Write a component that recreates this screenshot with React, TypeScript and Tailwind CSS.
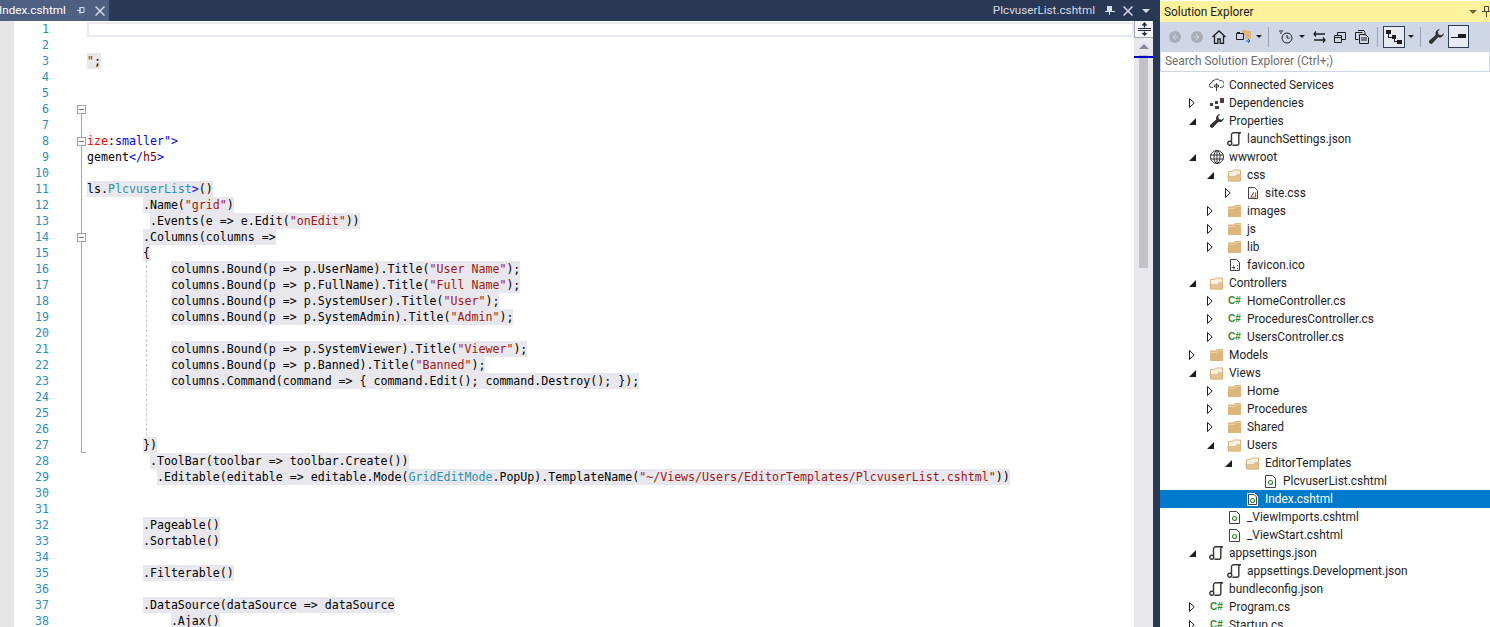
import type { ReactNode } from "react"

const STR = "text-[#a31515]"
const BLUE = "text-[#0000ff]"
const RED = "text-[#ff0000]"
const MAROON = "text-[#800000]"
const TYPE = "text-[#2b91af]"

type Token = string | [string, string]
type CodeLine = { indent?: number; tokens?: Token[]; plain?: boolean }

const bound = (a: string, b: string): Token[] => [`columns.Bound(p => p.${a}).Title(`, [`"${b}"`, STR], ");"]

// 38 visible editor lines
const code: CodeLine[] = [
  {},
  {},
  { tokens: [['"', STR], ";"] },
  {},
  {},
  {},
  {},
  { plain: true, tokens: [["ize", RED], ":", ["smaller", BLUE], ['">', BLUE]] },
  { plain: true, tokens: ["gement", ["</", BLUE], ["h5", MAROON], [">", BLUE]] },
  {},
  { tokens: ["ls.", ["PlcvuserList", TYPE], [">", BLUE], "()"] },
  { indent: 8, tokens: [".Name(", ['"grid"', STR], ")"] },
  { indent: 9, tokens: [".Events(e => e.Edit(", ['"onEdit"', STR], "))"] },
  { indent: 8, tokens: [".Columns(columns =>"] },
  { indent: 8, tokens: ["{"] },
  { indent: 12, tokens: bound("UserName", "User Name") },
  { indent: 12, tokens: bound("FullName", "Full Name") },
  { indent: 12, tokens: bound("SystemUser", "User") },
  { indent: 12, tokens: bound("SystemAdmin", "Admin") },
  {},
  { indent: 12, tokens: bound("SystemViewer", "Viewer") },
  { indent: 12, tokens: bound("Banned", "Banned") },
  { indent: 12, tokens: ["columns.Command(command => { command.Edit(); command.Destroy(); });"] },
  {},
  {},
  {},
  { indent: 8, tokens: ["})"] },
  { indent: 9, tokens: [".ToolBar(toolbar => toolbar.Create())"] },
  {
    indent: 10,
    tokens: [
      ".Editable(editable => editable.Mode(",
      ["GridEditMode", TYPE],
      ".PopUp).TemplateName(",
      ['"~/Views/Users/EditorTemplates/PlcvuserList.cshtml"', STR],
      "))",
    ],
  },
  {},
  {},
  { indent: 8, tokens: [".Pageable()"] },
  { indent: 8, tokens: [".Sortable()"] },
  {},
  { indent: 8, tokens: [".Filterable()"] },
  {},
  { indent: 8, tokens: [".DataSource(dataSource => dataSource"] },
  { indent: 12, tokens: [".Ajax()"] },
]

const foldBoxes = [6, 8, 14]

function FoldBox({ top }: { top: number }) {
  return (
    <div
      className="absolute left-[63px] flex h-[9px] w-[9px] items-center justify-center border border-[#a5a5a5] bg-white"
      style={{ top }}
    >
      <div className="h-px w-[5px] bg-[#6e6e6e]" />
    </div>
  )
}

function Editor() {
  return (
    <div className="relative min-w-0 flex-1 overflow-hidden bg-white font-['DejaVu_Sans_Mono',monospace] text-[11.62px] leading-4 text-black">
      {/* fold margin */}
      <div className="absolute left-[67px] top-[93px] h-[339px] w-px bg-[#a5a5a5]" />
      <div className="absolute left-[67px] top-[431px] h-px w-[5px] bg-[#a5a5a5]" />
      <div className="absolute left-[132px] top-[239px] h-[176px] border-l border-dashed border-[#c8c8c8]" />
      {foldBoxes.map((n) => (
        <FoldBox key={n} top={(n - 1) * 16 + 4} />
      ))}
      {code.map((line, i) => (
        <div key={i} className="flex h-4">
          <div className="w-[35px] shrink-0 text-right text-[#2b91af]">{i + 1}</div>
          <div className="w-[38px] shrink-0" />
          {i === 0 ? (
            <div className="mt-px h-[15px] flex-1 border-2 border-[#eaeaf2]" />
          ) : (
            <div className="whitespace-pre">
              {" ".repeat(line.indent ?? 0)}
              {line.tokens && (
                <span className={`inline-block h-4 ${line.plain ? "" : "bg-[#e8e8ec]"}`}>
                  {line.tokens.map((t, j) =>
                    typeof t === "string" ? <span key={j}>{t}</span> : <span key={j} className={t[1]}>{t[0]}</span>,
                  )}
                </span>
              )}
            </div>
          )}
        </div>
      ))}
    </div>
  )
}

function Scrollbar() {
  return (
    <div className="relative w-[19px] shrink-0 bg-[#e8e8ec]">
      <div className="flex h-[17px] w-full items-center justify-center border-b border-l border-[#a5a8b0] bg-[#f5f5f7]">
        <svg width="13" height="14" viewBox="0 0 13 14" fill="#1e2a3c">
          <path d="M6.500 0 9.500 3.500H7.200V5.500H5.800V3.500H3.500ZM0 6H13V7H0ZM0 8H13V9H0ZM5.800 9.500H7.200V11H9.500L6.500 14 3.500 11H5.800Z" />
        </svg>
      </div>
      <div className="mx-auto mt-[6px] h-0 w-0 border-x-[5px] border-b-[5px] border-x-transparent border-b-[#868999]" />
      <div className="absolute left-[5px] top-[34px] h-[213px] w-[9px] bg-[#c2c3c9]" />
      <div className="absolute left-0 top-[35px] h-[2px] w-full bg-[#0000c8]" />
    </div>
  )
}

function CloseX({ color = "#d6dbe9" }: { color?: string }) {
  return (
    <svg width="10" height="10" viewBox="0 0 10 10" stroke={color} strokeWidth="1.500">
      <path d="M.5.5l9 9M9.500.5l-9 9" />
    </svg>
  )
}

function TabBar() {
  return (
    <div className="flex h-[21px] shrink-0 items-center bg-[#293955] font-['Roboto',sans-serif] text-[11.7px]">
      <div className="flex h-full w-[109px] items-center bg-[#4d6082] text-white">
        <span className="ml-[-1px] w-[77px] shrink-0">Index.cshtml</span>
        <svg width="9" height="9" viewBox="0 0 9 9" fill="none" stroke="#d6dbe9" className="ml-[1px]">
          <path d="M0 4.500h3M3 1.500h4v5H3zM3 1v7" />
        </svg>
        <span className="ml-[9px]"><CloseX /></span>
      </div>
      <div className="flex-1" />
      <span className="text-[#d6dbe9]">PlcvuserList.cshtml</span>
      <svg width="10" height="9" viewBox="0 0 10 9" fill="#d6dbe9" className="ml-[10px]">
        <path d="M2 0h5v5h3v1H0V5h2zM4 6h1v3H4z" />
      </svg>
      <span className="ml-[8px]"><CloseX /></span>
      <div className="ml-[9px] mr-[3px] h-0 w-0 border-x-[4px] border-t-[4px] border-x-transparent border-t-[#d6dbe9]" />
    </div>
  )
}

/* ---------- solution explorer icons ---------- */

function FolderIcon({ open }: { open?: boolean }) {
  if (open) {
    return (
      <svg width="15" height="13" viewBox="0 0 15 13">
        <path d="M1.500 2.500h4l1-1.500h7v11h-12z" fill="#f5f0e4" stroke="#dcb67a" />
        <path d="M0 7h8l2-2h3.500v7.500H2z" fill="#dcb67a" opacity="0.8" />
      </svg>
    )
  }
  return (
    <svg width="13" height="12" viewBox="0 0 13 12" fill="#dcb67a">
      <path d="M0 1.500h6L7 0h6v12H0z" />
      <path d="M0 3h6.500L8 1.500h5V2H8.300L7 3.500H0z" fill="#f5e9d0" />
    </svg>
  )
}

function RazorIcon({ light }: { light?: boolean }) {
  return (
    <svg width="11" height="13" viewBox="0 0 11 13">
      <path d="M.5.500h7l3 3v9H.5z" stroke={light ? "#fff" : "#424242"} fill="#fff" />
      {light && <path d="M1.500 1.500h5.500l2.500 2.500v7.500h-8z" stroke="#424242" fill="#fff" />}
      <circle cx="5.500" cy="7.500" r="2" fill="none" stroke="#388a34" strokeWidth="1.200" />
    </svg>
  )
}

function JsonIcon() {
  return (
    <svg width="15" height="14" viewBox="0 0 15 14" fill="none" stroke="#333333" strokeWidth="1.400">
      <path d="M4.500 9.500V3a2.200 2.200 0 0 1 2.200-2.300h7.300M14 .7a2 2 0 0 0-2.200 2.200v8.400a2 2 0 0 1-2 2H5.500" />
      <circle cx="2.800" cy="11.300" r="2" />
    </svg>
  )
}

function CssIcon() {
  return (
    <svg width="10" height="12" viewBox="0 0 10 12" fill="none">
      <path d="M.5.500h6l3 3v8h-9z" fill="#fff" stroke="#424242" />
      <path d="M6 5 3 10h4.500V5.500" stroke="#c1532c" strokeWidth="1.100" />
    </svg>
  )
}

function IcoIcon() {
  return (
    <svg width="10" height="12" viewBox="0 0 10 12" fill="none">
      <path d="M.5.500h6l3 3v8h-9z" stroke="#424242" />
      <path d="M3 6.500h1v1H3zM2 8h3v1H4.500v1.500h-1V9H2zM7 6h1v1H7zM7 9h1v1H7z" fill="#424242" />
    </svg>
  )
}

function GlobeIcon() {
  return (
    <svg width="14" height="14" viewBox="0 0 14 14" fill="none" stroke="#333333">
      <circle cx="7" cy="7" r="6.500" />
      <ellipse cx="7" cy="7" rx="3" ry="6.500" />
      <path d="M.5 5h13M.5 9h13M7 .5v13" />
    </svg>
  )
}

function WrenchIcon({ size = 14 }: { size?: number }) {
  return (
    <svg width={size} height={size} viewBox="0 0 14 14" fill="#333333">
      <path d="M14 3.800a4.300 4.300 0 0 1-5.500 4L3.300 13.300a1.900 1.900 0 0 1-2.700-2.700L6.200 5.500A4.300 4.300 0 0 1 10.300 0L8.200 2.400l.7 2.700 2.700.7z" />
    </svg>
  )
}

function DepsIcon() {
  return (
    <svg width="14" height="11" viewBox="0 0 14 11" fill="#424242">
      <path d="M0 5h3v3H0zM5 3h3v3H5zM5 8h4v3H5zM10 0h4v5h-4z" />
    </svg>
  )
}

function CloudIcon() {
  return (
    <svg width="15" height="14" viewBox="0 0 15 14" fill="none" stroke="#424242">
      <path d="M4 9.500H2.500a2 2 0 0 1 0-4.300 3 3 0 0 1 2.700-3 3.500 3.500 0 0 1 5.600.5 3.300 3.300 0 0 1 1.700 6.800H11" />
      <path d="M7.500 5v8M5.500 7h4v2h-4z" />
    </svg>
  )
}

function CSharpIcon() {
  return <span className="font-['Liberation_Sans',sans-serif] text-[10px] font-bold leading-none text-[#388a34]">C#</span>
}

function Arrow({ state }: { state?: "open" | "closed" }) {
  if (state === "open") {
    return (
      <svg width="7" height="7" viewBox="0 0 7 7" fill="#1e1e1e">
        <path d="M7 0v7H0z" />
      </svg>
    )
  }
  if (state === "closed") {
    return (
      <svg width="6" height="10" viewBox="0 0 6 10" fill="none" stroke="#1e1e1e">
        <path d="M.5.500 5.200 5 .5 9.500z" />
      </svg>
    )
  }
  return null
}

type TreeRow = { level: number; label: string; icon: ReactNode; arrow?: "open" | "closed"; selected?: boolean }

const levelPadding = ["pl-[22px]", "pl-[40px]", "pl-[58px]", "pl-[76px]"]

const tree: TreeRow[] = [
  { level: 0, label: "Connected Services", icon: <CloudIcon /> },
  { level: 0, label: "Dependencies", icon: <DepsIcon />, arrow: "closed" },
  { level: 0, label: "Properties", icon: <WrenchIcon />, arrow: "open" },
  { level: 1, label: "launchSettings.json", icon: <JsonIcon /> },
  { level: 0, label: "wwwroot", icon: <GlobeIcon />, arrow: "open" },
  { level: 1, label: "css", icon: <FolderIcon open />, arrow: "open" },
  { level: 2, label: "site.css", icon: <CssIcon />, arrow: "closed" },
  { level: 1, label: "images", icon: <FolderIcon />, arrow: "closed" },
  { level: 1, label: "js", icon: <FolderIcon />, arrow: "closed" },
  { level: 1, label: "lib", icon: <FolderIcon />, arrow: "closed" },
  { level: 1, label: "favicon.ico", icon: <IcoIcon /> },
  { level: 0, label: "Controllers", icon: <FolderIcon open />, arrow: "open" },
  { level: 1, label: "HomeController.cs", icon: <CSharpIcon />, arrow: "closed" },
  { level: 1, label: "ProceduresController.cs", icon: <CSharpIcon />, arrow: "closed" },
  { level: 1, label: "UsersController.cs", icon: <CSharpIcon />, arrow: "closed" },
  { level: 0, label: "Models", icon: <FolderIcon />, arrow: "closed" },
  { level: 0, label: "Views", icon: <FolderIcon open />, arrow: "open" },
  { level: 1, label: "Home", icon: <FolderIcon />, arrow: "closed" },
  { level: 1, label: "Procedures", icon: <FolderIcon />, arrow: "closed" },
  { level: 1, label: "Shared", icon: <FolderIcon />, arrow: "closed" },
  { level: 1, label: "Users", icon: <FolderIcon open />, arrow: "open" },
  { level: 2, label: "EditorTemplates", icon: <FolderIcon open />, arrow: "open" },
  { level: 3, label: "PlcvuserList.cshtml", icon: <RazorIcon /> },
  { level: 2, label: "Index.cshtml", icon: <RazorIcon light />, selected: true },
  { level: 1, label: "_ViewImports.cshtml", icon: <RazorIcon /> },
  { level: 1, label: "_ViewStart.cshtml", icon: <RazorIcon /> },
  { level: 0, label: "appsettings.json", icon: <JsonIcon />, arrow: "open" },
  { level: 1, label: "appsettings.Development.json", icon: <JsonIcon /> },
  { level: 0, label: "bundleconfig.json", icon: <JsonIcon /> },
  { level: 0, label: "Program.cs", icon: <CSharpIcon />, arrow: "closed" },
  { level: 0, label: "Startup.cs", icon: <CSharpIcon />, arrow: "closed" },
]

function MiniCaret() {
  return <div className="h-0 w-0 border-x-[3px] border-t-[3px] border-x-transparent border-t-[#1e1e1e]" />
}

function Divider() {
  return <div className="h-5 w-px bg-[#9aa3b5]" />
}

function Toolbar() {
  return (
    <div className="flex h-[29px] shrink-0 items-center bg-[#cfd6e5] pl-[9px]">
      <svg width="12" height="12" viewBox="0 0 12 12">
        <circle cx="6" cy="6" r="6" fill="#a9aeb8" />
        <path d="M7 3 4 6l3 3M4 6h5" stroke="#cfd6e5" fill="none" />
      </svg>
      <svg width="12" height="12" viewBox="0 0 12 12" className="ml-[10px]">
        <circle cx="6" cy="6" r="6" fill="#a9aeb8" />
        <path d="M5 3l3 3-3 3M8 6H3" stroke="#cfd6e5" fill="none" />
      </svg>
      <svg width="14" height="14" viewBox="0 0 14 14" fill="none" stroke="#1e1e1e" strokeWidth="1.300" className="ml-[9px]">
        <path d="M.5 7 7 1l6.500 6M2.500 6v7.500h3.300V9h2.400v4.500h3.300V6" />
      </svg>
      <svg width="15" height="14" viewBox="0 0 15 14" className="ml-[10px]">
        <path d="M6 0h4l1 1h4v8H9V5H6z" fill="#dcb67a" />
        <path d="M.5 3.500h7v6h-7z" fill="none" stroke="#1e1e1e" />
        <path d="M1 2h3v1.500H1z" fill="#1e1e1e" />
        <path d="M10 11h4M12 13l2-2-2-2" stroke="#1a5fb4" fill="none" />
      </svg>
      <span className="ml-[5px]"><MiniCaret /></span>
      <span className="ml-[6px]"><Divider /></span>
      <svg width="14" height="14" viewBox="0 0 14 14" fill="none" stroke="#1e1e1e" className="ml-[10px]">
        <circle cx="8" cy="8" r="5" />
        <path d="M8 5v3h2.500M0 1h4M1 3h2" />
      </svg>
      <span className="ml-[6px]"><MiniCaret /></span>
      <svg width="13" height="12" viewBox="0 0 13 12" fill="none" stroke="#1e1e1e" strokeWidth="1.300" className="ml-[8px]">
        <path d="M3 .5 1 3l2 2.500M1 3h11M10 6.500 12 9l-2 2.500M12 9H1" />
      </svg>
      <svg width="12" height="12" viewBox="0 0 12 12" fill="none" stroke="#1e1e1e" className="ml-[8px]">
        <path d="M.5 4.500h7v7h-7zM3.500 4V1.500h8v7H8M1 6.500h6" />
      </svg>
      <svg width="14" height="14" viewBox="0 0 14 14" fill="none" stroke="#1e1e1e" className="ml-[9px]">
        <path d="M.5 2.500h7M.5 2.500v7h3M3 .5h6l1 2v3M4.500 4.500h6l3 3v6h-9zM6 8h6M6 10h6" />
      </svg>
      <span className="ml-[8px]"><Divider /></span>
      <div className="ml-[5px] flex h-[22px] w-[22px] items-center justify-center border border-[#2f3e58] bg-[#e7ebf3]">
        <svg width="16" height="14" viewBox="0 0 16 14" fill="#1e1e1e">
          <path d="M0 0h5v4H0zM6 5h4v4H6zM11 10h5v4h-5z" />
          <path d="M2 4h1v3h3v1H2zM8 9h1v2h2v1H8z" />
        </svg>
      </div>
      <span className="ml-[3px]"><MiniCaret /></span>
      <span className="ml-[6px]"><Divider /></span>
      <span className="ml-[8px]"><WrenchIcon size={15} /></span>
      <div className="ml-[4px] flex h-[23px] w-[21px] items-center justify-center border border-[#2f3e58] bg-[#e7ebf3]">
        <svg width="15" height="5" viewBox="0 0 15 5" fill="#1e1e1e">
          <path d="M7 0h8v3H7zM0 3h15v1H0z" />
        </svg>
      </div>
    </div>
  )
}

function SolutionExplorer() {
  return (
    <div className="flex w-[330px] shrink-0 flex-col overflow-hidden bg-white font-['Roboto',sans-serif] text-[11.9px] text-[#1e1e1e]">
      <div className="mt-px flex h-[21px] shrink-0 items-center bg-[#fff29d] pl-1">
        <span className="flex-1 pt-[2px] text-[#1e1e1e]">Solution Explorer</span>
        <div className="mr-[5px] h-0 w-0 border-x-[4px] border-t-[4px] border-x-transparent border-t-[#6e6440]" />
        <svg width="9" height="11" viewBox="0 0 9 11" fill="none" stroke="#4a4a30" className="mr-[-1px]">
          <path d="M2.500.5h4v5h-4zM0 5.500h9M4.500 6v5" />
        </svg>
      </div>
      <Toolbar />
      <div className="flex h-[21px] shrink-0 items-center border border-[#cfd6e5] bg-white pl-1 text-[#6d6d6d]">
        Search Solution Explorer (Ctrl+;)
      </div>
      <div className="h-[4px] shrink-0" />
      {tree.map((row) => (
        <div
          key={row.label + row.level}
          className={`flex h-[18px] shrink-0 items-center ${levelPadding[row.level]} ${row.selected ? "bg-[#007acc] text-white" : ""}`}
        >
          <div className="flex w-5 shrink-0 items-center justify-center">
            <Arrow state={row.arrow} />
          </div>
          <div className="ml-[7px] mr-[5px] flex w-[15px] shrink-0 items-center justify-center">{row.icon}</div>
          <span className="whitespace-nowrap pt-[2px]">{row.label}</span>
        </div>
      ))}
    </div>
  )
}

export default function App() {
  return (
    <div className="flex h-[627px] w-[1490px] overflow-hidden bg-[#293955]">
      <div className="flex w-[1153px] shrink-0 flex-col">
        <TabBar />
        <div className="flex min-h-0 flex-1">
          <div className="w-[14px] shrink-0 bg-[#e6e6e6]" />
          <Editor />
          <Scrollbar />
        </div>
      </div>
      <div className="w-[7px] shrink-0" />
      <SolutionExplorer />
    </div>
  )
}
